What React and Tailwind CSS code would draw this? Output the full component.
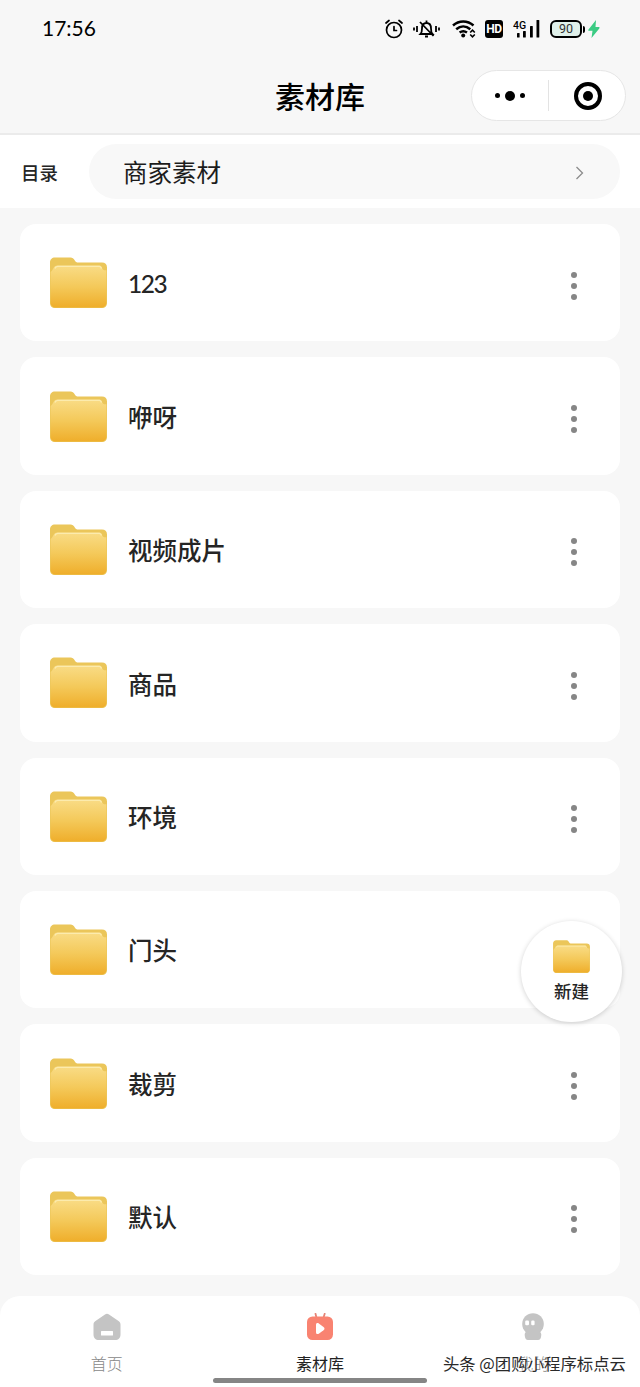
import React, { useState } from "react";

const folders = ["123", "咿呀", "视频成片", "商品", "环境", "门头", "裁剪", "默认"];

function FolderIcon({ className }) {
  return (
    <svg className={className} viewBox="0 0 57 51" fill="none">
      <defs>
        <linearGradient id="folderFront" x1="0" y1="0" x2="0" y2="1">
          <stop offset="0" stopColor="#f9dc86" />
          <stop offset="0.5" stopColor="#f4c95a" />
          <stop offset="1" stopColor="#efae2b" />
        </linearGradient>
      </defs>
      <path
        d="M5 0.5H20.500C22.500 0.5 23.500 1.5 24.500 3C25.500 4.800 26.500 5.600 28.500 5.600H52C55 5.600 57 7.500 57 10.500V46C57 49 55 51 52 51H5C2 51 0 49 0 46V5.500C0 2.500 2 0.500 5 0.500Z"
        fill="#ebc65a"
      />
      <path
        d="M0.600 15C3.500 13.500 3 8.600 7.500 8.600H49.500C51 8.600 51.500 9.500 52 11C52.700 12.800 54 13.600 56.400 13.200V45.500C56.400 48.500 54.600 50.400 51.800 50.400H5.200C2.400 50.400 0.600 48.500 0.600 45.500Z"
        fill="url(#folderFront)"
      />
      <path d="M5 11.500C5.500 10 6.200 9.400 7.700 9.400H49.500C50.500 9.400 51 10 51.500 11.500" stroke="#fcebad" strokeWidth="1.400" />
    </svg>
  );
}

function StatusBar() {
  return (
    <div className="flex h-[58px] items-center justify-between pl-[42px] pr-[40px] text-black">
      <span className="-mt-[3px] font-['Lato','Noto_Sans',sans-serif] text-[21px] leading-none">17:56</span>
      <div className="flex items-center">
        <svg className="h-5 w-[18px]" viewBox="0 0 18 20" fill="none" stroke="currentColor" strokeWidth="1.7" strokeLinecap="round">
          <circle cx="9" cy="11" r="7.500" />
          <path d="M9 7.500V11.500H11.500M1 4L4 1.500M17 4L14 1.500" />
        </svg>
        <svg className="ml-[10px] h-5 w-[27px]" viewBox="0 0 27 20" fill="none" stroke="currentColor" strokeWidth="1.800">
          <path d="M7.500 15C9 13.500 9 12 9 9.500C9 6 10.500 4 13.500 4C16.500 4 18 6 18 9.500C18 12 18 13.500 19.500 15ZM13.500 1.500V4M12 17.500H15M7 3L20.500 17" />
          <path d="M1 8.500V11.500M4 7V13M23 7V13M26 8.500V11.500" />
        </svg>
        <svg className="ml-[12px] h-5 w-[24px]" viewBox="0 0 24 20" fill="none" stroke="currentColor" strokeWidth="2.500">
          <path d="M1 6.500C7 1.200 15.500 1.200 21.500 6.500M4.200 10.200C8.500 6.600 14 6.600 18.300 10.200M7.600 13.500C10 11.800 12.500 11.800 15 13.500" />
          <circle cx="11.200" cy="16.500" r="2" fill="currentColor" stroke="none" />
          <path d="M18.200 13.500L20.500 11.200L22.800 13.500M18.200 15.500L20.500 17.800L22.800 15.500" strokeWidth="1.600" />
        </svg>
        <span className="ml-[9px] flex h-[18px] w-[18px] items-center justify-center rounded-[3px] bg-black font-['Roboto',sans-serif] text-[12px] font-bold leading-none tracking-[-0.5px] text-white">
          HD
        </span>
        <svg className="ml-[10px] h-5 w-[27px]" viewBox="0 0 27 20" fill="currentColor">
          <text x="0" y="9.500" fontSize="10.500" fontWeight="500" fontFamily="Roboto, sans-serif">4G</text>
          <rect x="4" y="14" width="2.600" height="4.500" rx="0.600" />
          <rect x="10" y="12" width="2.800" height="6.500" rx="0.600" />
          <rect x="17" y="7" width="2.800" height="11.500" rx="0.600" />
          <rect x="23.500" y="1" width="2.800" height="17.500" rx="0.600" />
        </svg>
        <div className="ml-[10px] flex h-[18px] w-[32px] items-center justify-center rounded-[6px] border-2 border-black bg-[#e0f0ea] font-['Roboto',sans-serif] text-[12.500px] leading-none text-[#333]">
          90
        </div>
        <span className="ml-px h-[7px] w-[2px] rounded-r bg-black" />
        <svg className="ml-[3px] h-[18px] w-[12px]" viewBox="0 0 12 18" fill="#3bcb83">
          <path d="M8 0L0.500 9.500C0 10.200 0.300 10.800 1 10.800H4.500L3.500 18L11.300 8.400C11.800 7.700 11.500 7.100 10.800 7.100H7.500Z" />
        </svg>
      </div>
    </div>
  );
}

function TitleBar() {
  return (
    <div className="grid h-[77px] grid-cols-[1fr_auto_1fr] items-center border-b-2 border-[#ebebeb] pr-[14px]">
      <h1 className="col-start-2 -mt-[2px] ml-[14px] text-[30px] font-medium leading-none text-black">素材库</h1>
      <div className="flex h-[51px] w-[155px] items-center justify-self-end rounded-full border border-[#e6e6e6] bg-white">
        <button className="flex w-[76px] items-center justify-center gap-[5px]">
          <span className="h-[5px] w-[5px] rounded-full bg-black" />
          <span className="h-[10px] w-[10px] rounded-full bg-black" />
          <span className="h-[5px] w-[5px] rounded-full bg-black" />
        </button>
        <span className="h-[31px] w-px bg-[#e3e3e3]" />
        <button className="flex grow items-center justify-center pl-[2px]">
          <span className="flex h-[28px] w-[28px] items-center justify-center rounded-full border-4 border-black">
            <span className="h-[10px] w-[10px] rounded-full bg-black" />
          </span>
        </button>
      </div>
    </div>
  );
}

function FolderCard({ name }) {
  return (
    <div className="flex h-[117.400px] items-center rounded-[16px] bg-white pl-[30px] pr-[43px]">
      <FolderIcon className="h-[51px] w-[57px]" />
      <span
        className={
          /^\d+$/.test(name)
            ? "ml-[21px] mt-[3px] grow font-['Lato',sans-serif] text-[24.500px] font-medium leading-none tracking-[-1.400px] text-[#252525]"
            : "ml-[21px] mt-[2px] grow text-[24.500px] font-medium leading-none text-[#252525]"
        }
      >
        {name}
      </span>
      <button className="mt-[6px] flex flex-col gap-[5px]">
        <span className="h-[6px] w-[6px] rounded-full bg-[#868686]" />
        <span className="h-[6px] w-[6px] rounded-full bg-[#868686]" />
        <span className="h-[6px] w-[6px] rounded-full bg-[#868686]" />
      </button>
    </div>
  );
}

function TabBar({ active, onChange }) {
  const tabs = [
    {
      name: "首页",
      icon: (
        <svg className="h-[28px] w-[28px]" viewBox="0 0 28 28" fill="#c4c4c4">
          <path d="M12 1.500C13.300 0.600 14.700 0.600 16 1.500L25.500 8C26.800 9 27.500 10 27.500 11.700V21.500C27.500 25 25.500 27 22 27H6C2.500 27 0.500 25 0.500 21.500V11.700C0.500 10 1.200 9 2.500 8Z" />
          <rect x="8" y="18" width="12" height="4.500" rx="0.500" fill="#fff" />
        </svg>
      ),
    },
    {
      name: "素材库",
      icon: (
        <svg className="h-[28px] w-[28px]" viewBox="0 0 28 28" fill="#f98371">
          <path d="M9.500 0.800L10.300 4M18.700 0.800L17.700 4" stroke="#e58476" strokeWidth="1.800" strokeLinecap="round" />
          <rect x="1" y="3.500" width="26" height="23.500" rx="5.500" />
          <path d="M10 12C10 10.200 11.300 9.600 12.800 10.500L17.500 14C18.800 15 18.800 16.200 17.500 17.200L12.800 20.700C11.300 21.600 10 21 10 19.200Z" fill="#fff" />
        </svg>
      ),
    },
    {
      name: "我的",
      icon: (
        <svg className="h-[28px] w-[28px]" viewBox="0 0 28 28" fill="#c4c4c4">
          <circle cx="14" cy="11" r="10.800" />
          <path d="M8.500 18H19.500C22 19 22.600 20.500 22.200 23C21.800 25.500 21 27 19 27H9C7 27 6.200 25.500 5.800 23C5.400 20.500 6 19 8.500 18Z" />
          <rect x="6.200" y="7.500" width="3.800" height="4.800" rx="1.200" fill="#fff" />
          <rect x="12.200" y="7.500" width="3.400" height="4.800" rx="1.200" fill="#fff" />
        </svg>
      ),
    },
  ];

  return (
    <div className="relative h-[91px] rounded-t-[20px] bg-white">
      <div className="grid grid-cols-3">
        {tabs.map((tab) => (
          <button key={tab.name} className="flex flex-col items-center pt-[17px]" onClick={() => onChange(tab.name)}>
            {tab.icon}
            <span
              className={
                active === tab.name
                  ? "mt-[14px] text-[16px] leading-none text-[#222]"
                  : "mt-[14px] text-[16px] font-light leading-none text-[#888]"
              }
            >
              {tab.name}
            </span>
          </button>
        ))}
      </div>
      <div className="absolute bottom-[4px] left-[213px] h-[5px] w-[214px] rounded-full bg-[#858585]" />
      <div className="absolute bottom-[16px] right-[14px] whitespace-nowrap text-[16.400px] leading-none text-[#2a2a2a] [text-shadow:-1px_-1px_0_#fff]">
        头条 @团购小程序标点云
      </div>
    </div>
  );
}

function App() {
  const [active, setActive] = useState("素材库");

  return (
    <div className="flex h-[1387px] w-[640px] flex-col overflow-hidden bg-[#f7f7f7] font-['Noto_Sans_CJK_SC',sans-serif]">
      <StatusBar />
      <TitleBar />
      <div className="flex h-[73px] items-center bg-white pl-[21px] pr-[20px]">
        <span className="mt-[2px] w-[68px] text-[18.500px] font-medium leading-none text-[#252525]">目录</span>
        <button className="flex h-[55px] grow items-center justify-between rounded-full bg-[#f8f8f8] pl-[34px] pr-[36px]">
          <span className="mt-[2px] text-[24.500px] leading-none text-[#1c1c1c]">商家素材</span>
          <svg className="mt-[2px] h-[14px] w-[9px]" viewBox="0 0 9 14" fill="none" stroke="#8c8c8c" strokeWidth="1.300">
            <path d="M1.500 1L7.500 7L1.500 13" />
          </svg>
        </button>
      </div>
      <div className="relative flex grow flex-col gap-[16px] px-[20px] pt-[16px]">
        {folders.map((name) => (
          <FolderCard key={name} name={name} />
        ))}
        <button className="absolute left-[521px] top-[713px] flex h-[101px] w-[101px] flex-col items-center rounded-full bg-white pt-[19px] shadow-[0_1px_5px_rgba(0,0,0,0.18)]">
          <FolderIcon className="h-[33px] w-[37px]" />
          <span className="mt-[9px] text-[17.500px] font-medium leading-none text-[#252525]">新建</span>
        </button>
      </div>
      <TabBar active={active} onChange={setActive} />
    </div>
  );
}

export default App;
